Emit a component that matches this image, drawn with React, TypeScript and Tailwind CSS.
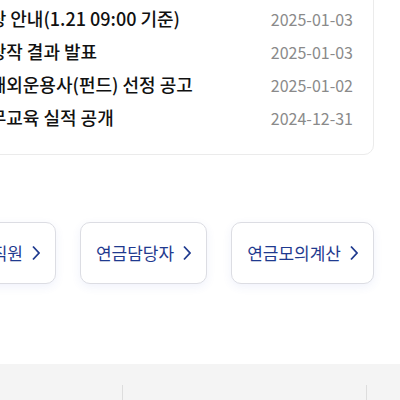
const notices = [
    { title: '지연현상 안내(1.21 09:00 기준)', date: '2025-01-03' },
    { title: '공모입상작 결과 발표', date: '2025-01-03' },
    { title: '주식형해외운용사(펀드) 선정 공고', date: '2025-01-02' },
    { title: '법정의무교육 실적 공개', date: '2024-12-31' },
]

const links = ['교직원', '연금담당자', '연금모의계산']

function Chevron() {
    return (
        <svg width="8" height="16" viewBox="0 0 8 16" fill="none" className="shrink-0">
            <path d="M1 1.5 L7 8 L1 14.5" stroke="#1f3a8f" strokeWidth="1.8" />
        </svg>
    )
}

export default function App() {
    return (
        <div
            className="w-[400px] h-[400px] overflow-hidden bg-white"
            style={{ fontFamily: '"Noto Sans CJK KR", "Noto Sans", sans-serif' }}
        >
            <section className="flex justify-end pr-[26px]">
                <div className="w-[456px] shrink-0 -mt-[40px] rounded-[10px] border border-[#ebebeb] pt-[41px] pb-[20px] pl-[21px] pr-[20px]">
                    <ul>
                        {notices.map((n) => (
                            <li key={n.title} className="h-[33px] flex items-center justify-between">
                                <span className="text-[18px] font-medium text-[#111] whitespace-nowrap">{n.title}</span>
                                <span className="text-[16px] text-[#8a8a8a] whitespace-nowrap">{n.date}</span>
                            </li>
                        ))}
                    </ul>
                </div>
            </section>

            <section className="flex justify-end gap-6 pr-[26px] mt-[67px]">
                {links.map((label) => (
                    <button
                        key={label}
                        className="shrink-0 h-[62px] px-[15px] flex items-center gap-[9px] rounded-[10px] border border-[#dcdde3] bg-white shadow-[0_3px_10px_rgba(70,90,200,0.08)] text-[17px] text-[#1f3a8f] whitespace-nowrap"
                    >
                        {label}
                        <Chevron />
                    </button>
                ))}
            </section>

            <footer className="mt-[80px] h-[100px] bg-[#f4f4f4] pt-[21px] flex">
                <div className="w-[122px] shrink-0" />
                <div className="w-[244px] shrink-0 h-[60px] border-l border-[#dddddd]" />
                <div className="w-[200px] shrink-0 h-[60px] border-l border-[#dddddd]" />
            </footer>
        </div>
    )
}
